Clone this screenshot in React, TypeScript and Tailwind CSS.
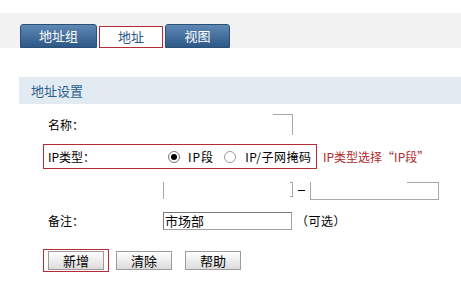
import React from 'react';

const font = { fontFamily: '"Noto Sans CJK SC", "Liberation Sans", sans-serif' };

const tabBlue =
  'h-[24px] flex items-center justify-center rounded-t-[3px] text-white text-[13px] bg-gradient-to-b from-[#5f88b4] to-[#2d5987] border border-[#2b5077]';

const Btn: React.FC<{ label: string }> = ({ label }) => (
  <div className="w-[56px] h-[19px] flex items-center justify-center text-[13px] text-black border border-[#9c9c9c] bg-gradient-to-b from-white to-[#dcdcdc]">
    {label}
  </div>
);

const App: React.FC = () => {
  return (
    <div className="w-[461px] h-[288px] bg-white overflow-hidden text-[12px] text-black" style={font}>
      {/* tabs */}
      <div className="mt-[13px] h-[35px] bg-[#f2f2f2] flex items-end pl-[20px] gap-[2px]">
        <div className={`${tabBlue} w-[77px]`}>地址组</div>
        <div className="w-[64px] h-[22px] flex items-center justify-center bg-white border border-[#b42c36] text-[13px] text-[#2a5785]">
          地址
        </div>
        <div className={`${tabBlue} w-[65px]`}>视图</div>
      </div>

      {/* section header */}
      <div className="mt-[29px] ml-[19px] h-[27px] bg-[#e3ebf2] flex items-center pl-[12px] text-[13px] text-[#2b5d8c]">
        地址设置
      </div>

      {/* name */}
      <div className="mt-[10px] h-[21px] flex items-center pl-[48px]">
        <div className="w-[115px]">名称：</div>
        <div className="ml-[110px] w-[20px] h-[21px] border-t border-r border-[#a8a8a8]" />
      </div>

      {/* ip type */}
      <div className="mt-[9px] ml-[43px] w-[274px] h-[25px] border border-[#b42c36] flex items-center pl-[4px]">
        <div className="w-[120px]">IP类型：</div>
        <div className="w-[12px] h-[12px] rounded-full border border-[#777] flex items-center justify-center bg-white">
          <div className="w-[6px] h-[6px] rounded-full bg-black" />
        </div>
        <span className="ml-[8px] tracking-[1px]">IP段</span>
        <div className="ml-[10px] w-[12px] h-[12px] rounded-full border border-[#999] bg-white" />
        <span className="ml-[9px] tracking-[0.5px]">IP/子网掩码</span>
      </div>
      <div className="-mt-[19px] ml-[323px] h-[14px] flex items-center text-[#b0282b] text-[12px]">
        IP类型选择“IP段”
      </div>

      {/* ip range */}
      <div className="mt-[18px] h-[18px] flex items-start pl-[163px]">
        <div className="w-[127px] h-[17px] border-l border-[#a8a8a8]" />
        <div className="w-[3px] h-[15px] border-y border-r border-[#a8a8a8]" />
        <div className="mt-[8px] mx-[5px] w-[7px] h-[1px] bg-black" />
        <div className="w-[129px] h-[18px] border-l border-r border-b border-[#a8a8a8] flex">
          <div className="ml-auto w-[31px] h-0 border-t border-[#a8a8a8]" />
        </div>
      </div>

      {/* note */}
      <div className="mt-[12px] h-[18px] flex items-center pl-[48px]">
        <div className="w-[115px]">备注：</div>
        <div className="w-[129px] h-[18px] border border-[#a0a0a0] border-t-[#7a7a7a] border-l-[#7a7a7a] flex items-center pl-[1px] text-[13px]">
          市场部
        </div>
        <span className="ml-[4px] tracking-[0.5px]">（可选）</span>
      </div>

      {/* buttons */}
      <div className="mt-[19px] flex items-center pl-[43px]">
        <div className="border border-[#b42c36] px-[4px] py-[1px]">
          <Btn label="新增" />
        </div>
        <div className="ml-[7px]">
          <Btn label="清除" />
        </div>
        <div className="ml-[13px]">
          <Btn label="帮助" />
        </div>
      </div>
    </div>
  );
};

export default App;
